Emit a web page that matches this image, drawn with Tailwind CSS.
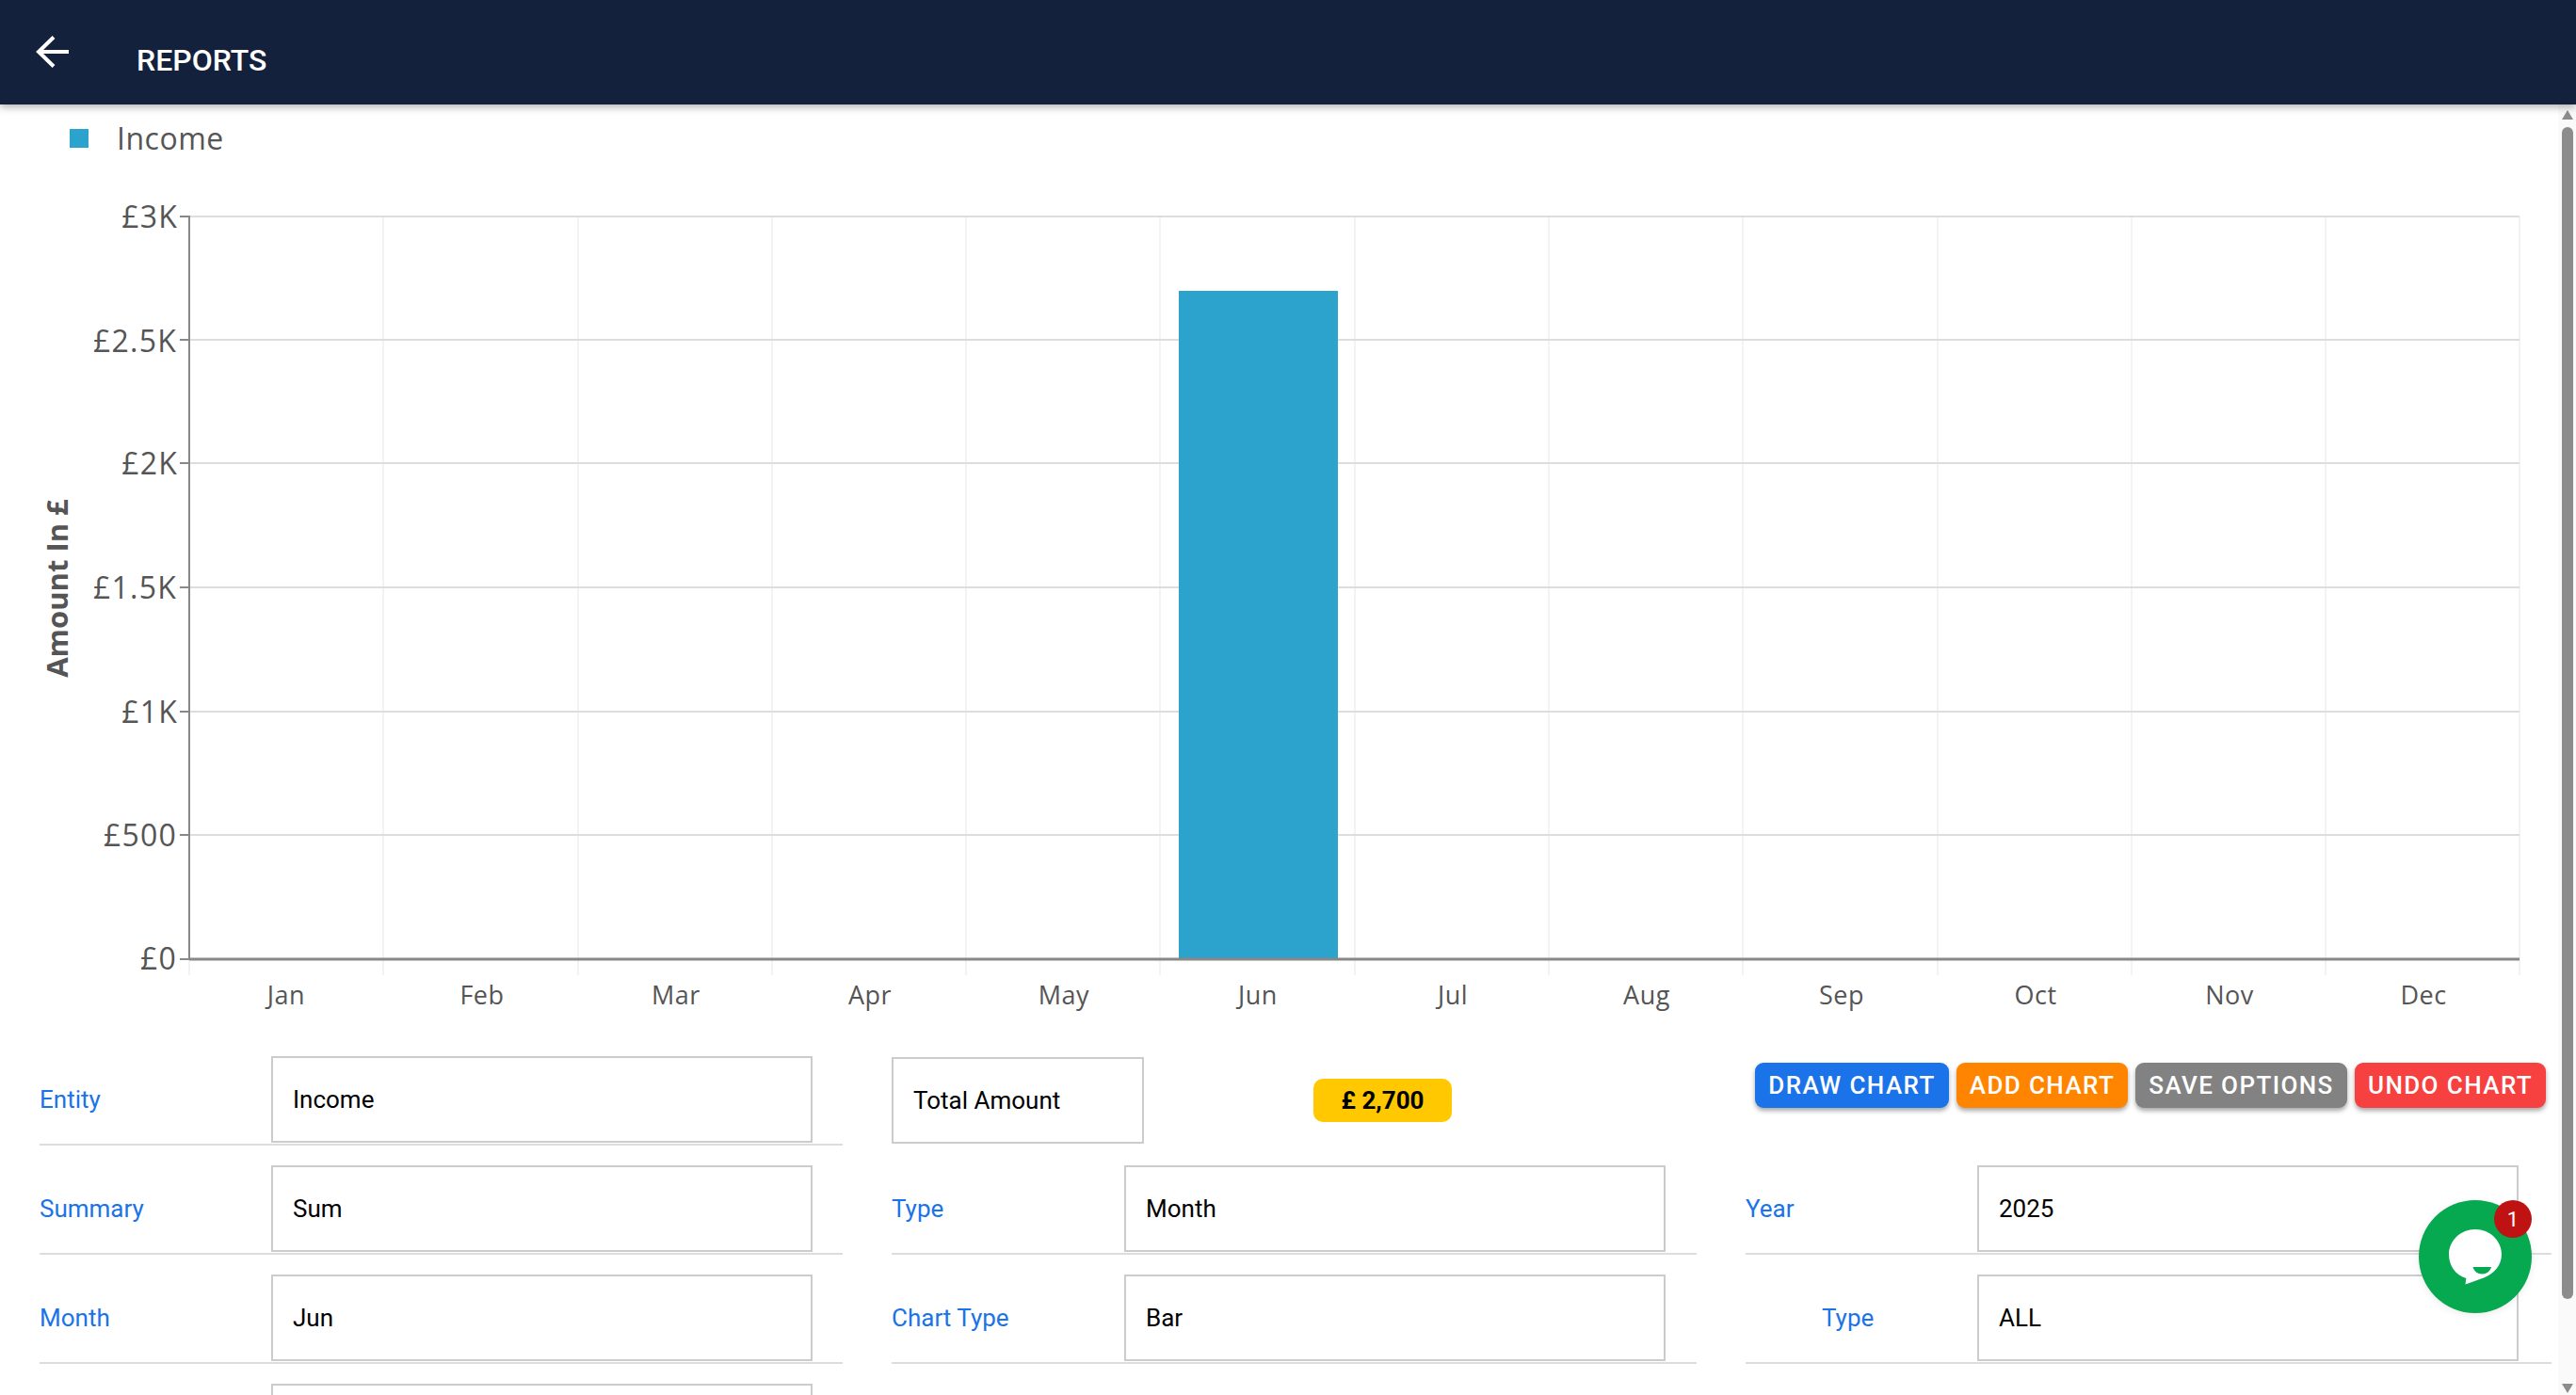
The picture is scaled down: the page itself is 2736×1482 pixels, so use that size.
<!DOCTYPE html>
<html lang="en">
<head>
    <meta charset="UTF-8">
    <title>Reports</title>
    <script src="https://cdn.jsdelivr.net/npm/@tailwindcss/browser@4"></script>
</head>
<body class="h-[1482px] w-[2736px] overflow-hidden bg-white font-['Roboto',sans-serif]">
    <!-- top bar -->
    <nav class="relative z-10 flex h-[111px] bg-[#14213d] shadow-[0_3px_8px_rgba(0,0,0,0.3)]">
        <button class="mt-[38px] ml-[38px] h-[34px] w-[35px] text-white">
            <svg viewBox="0 0 35 34" class="h-[34px] w-[35px]" fill="none" stroke="currentColor" stroke-width="4"><path d="M35 17H3M19 1.500 3 17l16 15.500"/></svg>
        </button>
        <h1 class="mt-[45px] ml-[72px] text-[32px] leading-[38px] font-medium text-white">REPORTS</h1>
    </nav>

    <div class="flex h-[1371px]">
        <main class="w-[2717px] overflow-hidden">
            <!-- legend -->
            <div class="flex h-[67px] items-center pt-[5px] pl-[74px] font-['Open_Sans',sans-serif]">
                <span class="h-[20px] w-[20px] bg-[#2ba3cd]"></span>
                <span class="ml-[30px] text-[32px] tracking-[0.5px] text-[#555]">Income</span>
            </div>

            <!-- chart -->
            <svg width="2717" height="923" viewBox="0 178 2717 923" class="block font-['Open_Sans',sans-serif]">
                <g stroke="#f3f3f3" stroke-width="2">
                    <path d="M407 230V1036M614 230V1036M820 230V1036M1026 230V1036M1232 230V1036M1439 230V1036M1645 230V1036M1851 230V1036M2058 230V1036M2264 230V1036M2470 230V1036M2676 230V1036M201 1018V1036"/>
                </g>
                <g stroke="#ddd" stroke-width="2">
                    <path d="M201 230H2676M201 361H2676M201 492H2676M201 624H2676M201 756H2676M201 887H2676"/>
                </g>
                <rect x="1252" y="309" width="169" height="709" fill="#2ba3cd"/>
                <g stroke="#888" stroke-width="2">
                    <path d="M191 230H202M191 361H202M191 492H202M191 624H202M191 756H202M191 887H202M191 1019H202"/>
                    <path d="M201 230V1019"/>
                </g>
                <path d="M201 1019H2676" stroke="#888" stroke-width="3"/>
                <g fill="#555" font-size="32" letter-spacing="1.2" text-anchor="end">
                    <text x="189" y="242">£3K</text>
                    <text x="188" y="374">£2.5K</text>
                    <text x="189" y="504">£2K</text>
                    <text x="188" y="636">£1.5K</text>
                    <text x="189" y="768">£1K</text>
                    <text x="188" y="899">£500</text>
                    <text x="188" y="1030">£0</text>
                </g>
                <g fill="#555" font-size="27" letter-spacing="0.5" text-anchor="middle">
                    <text x="304" y="1067">Jan</text>
                    <text x="512" y="1067">Feb</text>
                    <text x="718" y="1067">Mar</text>
                    <text x="924" y="1067">Apr</text>
                    <text x="1130" y="1067">May</text>
                    <text x="1336" y="1067">Jun</text>
                    <text x="1543" y="1067">Jul</text>
                    <text x="1749" y="1067">Aug</text>
                    <text x="1956" y="1067">Sep</text>
                    <text x="2162" y="1067">Oct</text>
                    <text x="2368" y="1067">Nov</text>
                    <text x="2574" y="1067">Dec</text>
                </g>
                <text transform="translate(72 625) rotate(-90)" fill="#555" font-size="31" font-weight="700" text-anchor="middle">Amount In £</text>
            </svg>

            <!-- options form -->
            <section class="grid grid-cols-[853px_855px_856px] gap-x-[52px] pl-[42px] text-[26px]">
                <div class="flex h-[116px] items-center border-b-2 border-[#ddd] pt-[21px] pb-[1px]">
                    <label class="w-[246px] text-[#1a73e8]">Entity</label>
                    <div class="flex h-[92px] w-[575px] items-center border-2 border-[#ccc] pl-[21px]">Income</div>
                </div>
                <div class="flex h-[116px] items-center pt-[20px]">
                    <div class="flex h-[92px] w-[268px] items-center border-2 border-[#ccc] pl-[21px]">Total Amount</div>
                    <span class="ml-[180px] flex h-[46px] w-[147px] items-center justify-center rounded-[10px] bg-[#ffc800] font-bold">£ 2,700</span>
                </div>
                <div class="flex h-[116px] gap-[8px] pt-[28px] pl-[10px] text-white font-medium tracking-[1.4px]">
                    <button class="h-[48px] w-[206px] rounded-[9px] bg-[#1a73e8] shadow-[0_3px_5px_rgba(0,0,0,0.35)]">DRAW CHART</button>
                    <button class="h-[48px] w-[182px] rounded-[9px] bg-[#ff8500] shadow-[0_3px_5px_rgba(0,0,0,0.35)]">ADD CHART</button>
                    <button class="h-[48px] w-[225px] rounded-[9px] bg-[#828282] shadow-[0_3px_5px_rgba(0,0,0,0.35)]">SAVE OPTIONS</button>
                    <button class="h-[48px] w-[203px] rounded-[9px] bg-[#f74040] shadow-[0_3px_5px_rgba(0,0,0,0.35)]">UNDO CHART</button>
                </div>

                <div class="flex h-[116px] items-center border-b-2 border-[#ddd] pt-[21px] pb-[1px]">
                    <label class="w-[246px] text-[#1a73e8]">Summary</label>
                    <div class="flex h-[92px] w-[575px] items-center border-2 border-[#ccc] pl-[21px]">Sum</div>
                </div>
                <div class="flex h-[116px] items-center border-b-2 border-[#ddd] pt-[21px] pb-[1px]">
                    <label class="w-[247px] text-[#1a73e8]">Type</label>
                    <div class="flex h-[92px] w-[575px] items-center border-2 border-[#ccc] pl-[21px]">Month</div>
                </div>
                <div class="flex h-[116px] items-center border-b-2 border-[#ddd] pt-[21px] pb-[1px]">
                    <label class="w-[246px] text-[#1a73e8]">Year</label>
                    <div class="flex h-[92px] w-[575px] items-center border-2 border-[#ccc] pl-[21px]">2025</div>
                </div>

                <div class="flex h-[116px] items-center border-b-2 border-[#ddd] pt-[21px] pb-[1px]">
                    <label class="w-[246px] text-[#1a73e8]">Month</label>
                    <div class="flex h-[92px] w-[575px] items-center border-2 border-[#ccc] pl-[21px]">Jun</div>
                </div>
                <div class="flex h-[116px] items-center border-b-2 border-[#ddd] pt-[21px] pb-[1px]">
                    <label class="w-[247px] text-[#1a73e8]">Chart Type</label>
                    <div class="flex h-[92px] w-[575px] items-center border-2 border-[#ccc] pl-[21px]">Bar</div>
                </div>
                <div class="flex h-[116px] items-center border-b-2 border-[#ddd] pt-[21px] pb-[1px]">
                    <label class="w-[246px] pl-[81px] text-[#1a73e8]">Type</label>
                    <div class="flex h-[92px] w-[575px] items-center border-2 border-[#ccc] pl-[21px]">ALL</div>
                </div>

                <div class="flex h-[116px] items-start pt-[21px]">
                    <div class="ml-[246px] h-[92px] w-[575px] border-2 border-[#ccc]"></div>
                </div>
            </section>
        </main>

        <!-- scrollbar -->
        <aside class="flex w-[19px] flex-col items-center bg-[#fafafa] pt-[6px] pr-[3px] pl-[4px]">
            <svg width="12" height="10" viewBox="0 0 12 10" class="shrink-0"><path d="M6 0 12 10H0z" fill="#8c8c8c"/></svg>
            <div class="mt-[8px] h-[1245px] w-[12px] shrink-0 rounded-full bg-[#8c8c8c]"></div>
            <svg width="12" height="10" viewBox="0 0 12 10" class="mt-[90px] shrink-0"><path d="M0 0H12L6 10z" fill="#8c8c8c"/></svg>
        </aside>
    </div>

    <!-- chat launcher -->
    <button class="fixed top-[1275px] left-[2569px] z-20 h-[120px] w-[120px] rounded-full bg-[#06a850] shadow-[0_2px_8px_rgba(0,0,0,0.08)]">
        <svg viewBox="0 0 120 120" class="h-[120px] w-[120px]">
            <path d="M60 31c15.500 0 28 12 28 26.500 0 12-8.500 21-19 25l-19.500 7 .800-6.500C38 79 32 69 32 57.500 32 43 44.500 31 60 31z" fill="#fff"/>
            <path d="M57.500 71H77c-1 4.500-5 7.500-9.800 7.500S58.500 75.500 57.500 71z" fill="#06a850"/>
        </svg>
        <span class="absolute top-0 right-0 flex h-[40px] w-[40px] items-center justify-center rounded-full bg-[#bf1313] text-[22px] text-white">1</span>
    </button>
</body>
</html>
